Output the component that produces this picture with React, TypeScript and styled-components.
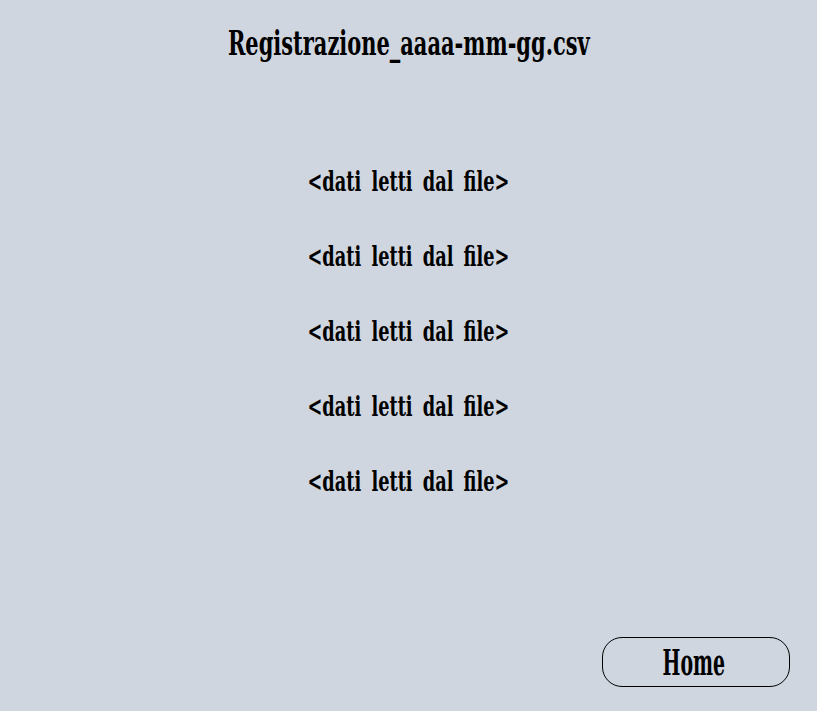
import React from "react";
import styled, { createGlobalStyle } from "styled-components";

const Global = createGlobalStyle`
  html, body { margin: 0; padding: 0; background: #cfd6df; }
  body { width: 817px; height: 711px; overflow: hidden; }
`;

const Page = styled.div`
  width: 817px;
  height: 711px;
  box-sizing: border-box;
  display: flex;
  flex-direction: column;
  align-items: center;
  background: #cfd6df;
  font-family: "DejaVu Serif", "Liberation Serif", serif;
  font-weight: bold;
  color: #000;
  padding-top: 24px;
`;

const Narrow = styled.span<{ $sx: number }>`
  display: inline-block;
  white-space: nowrap;
  transform: scaleX(${(p) => p.$sx});
  transform-origin: center;
`;

const Title = styled.h1`
  margin: 0;
  font-size: 33px;
  font-weight: bold;
  line-height: 40px;
  letter-spacing: 0;
`;

const List = styled.div`
  display: flex;
  flex-direction: column;
  align-items: center;
  gap: 45px;
  margin-top: 103px;
`;

const Row = styled.div`
  font-size: 27px;
  line-height: 30px;
  word-spacing: 6px;
`;

const Footer = styled.div`
  margin-top: auto;
  align-self: stretch;
  display: flex;
  justify-content: flex-end;
  padding: 0 27px 24px 0;
`;

const HomeButton = styled.button`
  width: 188px;
  height: 50px;
  box-sizing: border-box;
  border: 1px solid #000;
  border-radius: 20px;
  background: transparent;
  font-family: inherit;
  font-weight: bold;
  font-size: 35px;
  line-height: normal;
  color: #000;
  padding: 0 5px 0 0;
  display: flex;
  align-items: center;
  justify-content: center;
  cursor: pointer;
`;

export default function App() {
  const rows = Array.from({ length: 5 }, () => "<dati letti dal file>");
  return (
    <>
      <Global />
      <Page>
        <Title>
          <Narrow $sx={0.635}>Registrazione_aaaa-mm-gg.csv</Narrow>
        </Title>
        <List>
          {rows.map((r, i) => (
            <Row key={i}>
              <Narrow $sx={0.658}>{r}</Narrow>
            </Row>
          ))}
        </List>
        <Footer>
          <HomeButton>
            <Narrow $sx={0.54}>Home</Narrow>
          </HomeButton>
        </Footer>
      </Page>
    </>
  );
}
